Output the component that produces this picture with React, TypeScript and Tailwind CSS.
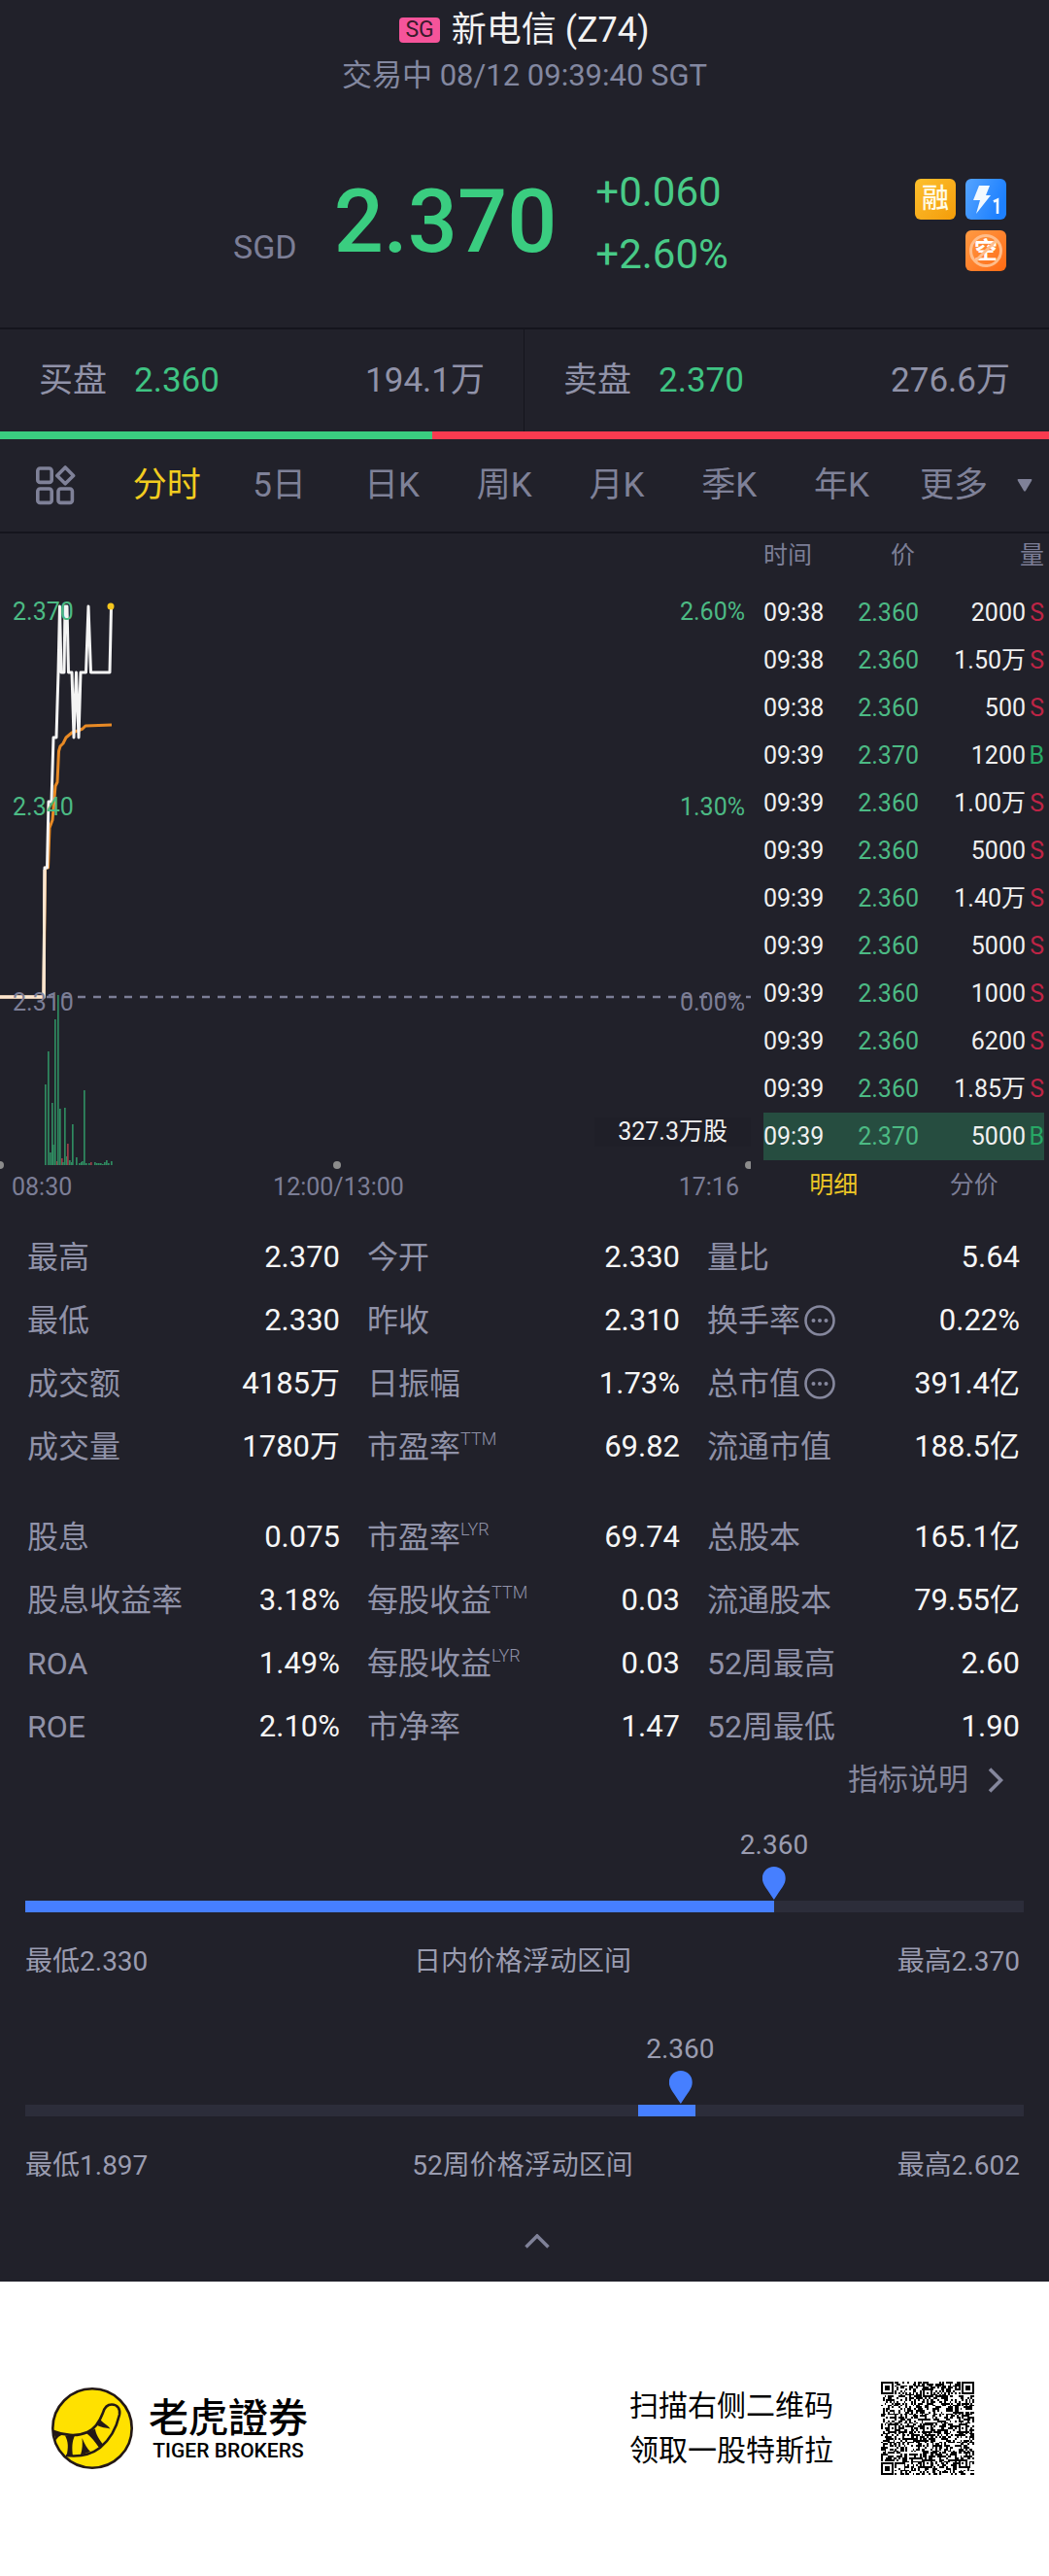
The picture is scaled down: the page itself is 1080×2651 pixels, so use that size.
import { useState } from 'react';

const periods = ['分时', '5日', '日K', '周K', '月K', '季K', '年K', '更多'];

const ticks = [
  { time: '09:38', price: '2.360', volume: '2000', side: 'S' },
  { time: '09:38', price: '2.360', volume: '1.50万', side: 'S' },
  { time: '09:38', price: '2.360', volume: '500', side: 'S' },
  { time: '09:39', price: '2.370', volume: '1200', side: 'B' },
  { time: '09:39', price: '2.360', volume: '1.00万', side: 'S' },
  { time: '09:39', price: '2.360', volume: '5000', side: 'S' },
  { time: '09:39', price: '2.360', volume: '1.40万', side: 'S' },
  { time: '09:39', price: '2.360', volume: '5000', side: 'S' },
  { time: '09:39', price: '2.360', volume: '1000', side: 'S' },
  { time: '09:39', price: '2.360', volume: '6200', side: 'S' },
  { time: '09:39', price: '2.360', volume: '1.85万', side: 'S' },
  { time: '09:39', price: '2.370', volume: '5000', side: 'B' },
];

type Stat = { label: string; value: string; sup?: string; info?: boolean };

const quoteStats: Stat[] = [
  { label: '最高', value: '2.370' },
  { label: '今开', value: '2.330' },
  { label: '量比', value: '5.64' },
  { label: '最低', value: '2.330' },
  { label: '昨收', value: '2.310' },
  { label: '换手率', value: '0.22%', info: true },
  { label: '成交额', value: '4185万' },
  { label: '日振幅', value: '1.73%' },
  { label: '总市值', value: '391.4亿', info: true },
  { label: '成交量', value: '1780万' },
  { label: '市盈率', value: '69.82', sup: 'TTM' },
  { label: '流通市值', value: '188.5亿' },
];

const companyStats: Stat[] = [
  { label: '股息', value: '0.075' },
  { label: '市盈率', value: '69.74', sup: 'LYR' },
  { label: '总股本', value: '165.1亿' },
  { label: '股息收益率', value: '3.18%' },
  { label: '每股收益', value: '0.03', sup: 'TTM' },
  { label: '流通股本', value: '79.55亿' },
  { label: 'ROA', value: '1.49%' },
  { label: '每股收益', value: '0.03', sup: 'LYR' },
  { label: '52周最高', value: '2.60' },
  { label: 'ROE', value: '2.10%' },
  { label: '市净率', value: '1.47' },
  { label: '52周最低', value: '1.90' },
];

// [x, height, rising]
const volumeBars: [number, number, boolean][] = [
  [47, 83, true], [50, 117, true], [52, 13, true], [54, 64, true], [55, 21, true],
  [57, 150, true], [59, 4, false], [60, 175, true], [62, 58, true], [64, 7, false],
  [65, 3, true], [67, 59, true], [69, 9, true], [70, 22, false], [72, 5, true],
  [74, 3, true], [75, 42, true], [79, 8, true], [82, 2, true], [84, 3, true],
  [85, 4, true], [87, 77, true], [89, 2, true], [92, 2, true], [94, 3, false],
  [98, 3, true], [100, 2, true], [102, 2, true], [104, 2, true], [106, 1, true],
  [108, 3, true], [110, 5, true], [112, 2, true], [115, 4, true],
];

function PriceChart() {
  return (
    <svg viewBox="0 0 773 656" className="block w-full" aria-hidden="true">
      <line x1="48" y1="477" x2="773" y2="477" stroke="#7c7e96" strokeWidth="2.5" strokeDasharray="8 8" />
      <g>
        {volumeBars.map(([x, h, rising]) => (
          <rect key={x} x={x - 1} y={650 - h} width="1.7" height={h} fill={rising ? '#2f8a60' : '#9a3d48'} />
        ))}
      </g>
      <polyline
        points="0,477 45,477 46.5,344 49.5,344 51,303 54,295 57,260 59,256 60.5,224 62,219 65,216 68,210 74,205 80,203 85,201 88,198 115,197"
        fill="none"
        stroke="#e88a25"
        strokeWidth="3"
        strokeLinejoin="round"
      />
      <polyline
        points="0,477 45,477 46,344 48.5,344 50,276 53,276 55,210 58,210 60,143 61.5,75 63,143 66,143 67,75 69,75 70.5,143 74,143 76,210 78.5,143 81,210 83,143 88.5,143 91,75 93.5,143 113,143 114.5,75"
        fill="none"
        stroke="#f4f4f4"
        strokeWidth="3"
        strokeLinejoin="round"
      />
      <polyline points="0,477 45,477 46,346" fill="none" stroke="#fbe6cf" strokeWidth="3" />
      <circle cx="114" cy="75" r="3.5" fill="#f5c61d" />
      <g fill="#8c8c8c">
        <circle cx="0" cy="650" r="4" />
        <circle cx="347" cy="650" r="4" />
        <circle cx="771" cy="650" r="4" />
      </g>
    </svg>
  );
}

function TickTable() {
  return (
    <table className="w-full table-fixed border-collapse text-[25px] leading-[30px]">
      <colgroup>
        <col className="w-[80px]" />
        <col className="w-[80px]" />
        <col />
        <col className="w-[19px]" />
      </colgroup>
      <thead>
        <tr className="h-[57px] text-[#7c7e96]">
          <th className="p-0 pb-3 text-left font-normal">时间</th>
          <th className="p-0 pb-3 pr-1 text-right font-normal">价</th>
          <th className="p-0 pb-3 text-right font-normal" colSpan={2}>量</th>
        </tr>
      </thead>
      <tbody>
        {ticks.map((t, i) => (
          <tr key={i} className={`h-[49px] ${i === ticks.length - 1 ? 'bg-[#264d40]' : ''}`}>
            <td className="p-0 text-[#f0f0f0]">{t.time}</td>
            <td className="p-0 text-right text-[#4cba84]">{t.price}</td>
            <td className="p-0 text-right text-[#f0f0f0]">{t.volume}</td>
            <td className={`p-0 text-right ${t.side === 'S' ? 'text-[#bd2445]' : 'text-[#27a765]'}`}>
              {t.side}
            </td>
          </tr>
        ))}
      </tbody>
    </table>
  );
}

function StatGrid({ items }: { items: Stat[] }) {
  return (
    <dl className="grid grid-cols-3 gap-x-7 pl-7 pr-[30px]">
      {items.map((s, i) => (
        <div key={i} className="flex h-[65px] items-center justify-between">
          <dt className="flex items-center text-[32px] leading-[40px] text-[#9092a8]">
            {s.label}
            {s.sup && <span className="self-start text-[18px] leading-[24px] font-light">{s.sup}</span>}
            {s.info && (
              <svg viewBox="0 0 32 32" className="ml-1 size-8" fill="none" aria-hidden="true">
                <circle cx="16" cy="16" r="14.5" stroke="#85879d" strokeWidth="2.6" />
                <g fill="#85879d">
                  <circle cx="9.5" cy="16" r="2" />
                  <circle cx="16" cy="16" r="2" />
                  <circle cx="22.5" cy="16" r="2" />
                </g>
              </svg>
            )}
          </dt>
          <dd className="text-[31px] leading-[40px] text-[#f6f6f6]">{s.value}</dd>
        </div>
      ))}
    </dl>
  );
}

type RangeProps = {
  title: string;
  low: string;
  high: string;
  current: string;
  from: number;
  to: number;
  marker: number;
};

function PriceRange({ title, low, high, current, from, to, marker }: RangeProps) {
  return (
    <section className="px-[26px] text-[28px] leading-[40px] text-[#9a9cb0]">
      <div className="relative h-[77px]">
        <div
          className="absolute top-0 flex -translate-x-1/2 flex-col items-center gap-[2px]"
          style={{ left: `${marker}%` }}
        >
          <span>{current}</span>
          <svg viewBox="0 0 24 34" className="h-[34px] w-6" aria-hidden="true">
            <path d="M12 0C5.2 0 0 5.2 0 12c0 6 5 11 12 22 7-11 12-16 12-22C24 5.2 18.8 0 12 0Z" fill="#467fff" />
          </svg>
        </div>
      </div>
      <div className="relative h-3 bg-[#2c2d3a]">
        <div className="absolute h-full bg-[#467fff]" style={{ left: `${from}%`, width: `${to - from}%` }} />
      </div>
      <div className="mt-[31px] flex justify-between">
        <span>最低{low}</span>
        <span>{title}</span>
        <span className="pr-1">最高{high}</span>
      </div>
    </section>
  );
}

const QR_SIZE = 53;

function qrPath() {
  const grid = Array.from({ length: QR_SIZE }, () => new Array<boolean>(QR_SIZE).fill(false));
  let seed = 20210812;
  for (let y = 0; y < QR_SIZE; y++) {
    for (let x = 0; x < QR_SIZE; x++) {
      seed = (Math.imul(seed, 1664525) + 1013904223) >>> 0;
      grid[y][x] = seed / 4294967296 < 0.5;
    }
  }
  const square = (cx: number, cy: number, radius: number, isDark: (d: number) => boolean) => {
    for (let y = cy - radius; y <= cy + radius; y++) {
      for (let x = cx - radius; x <= cx + radius; x++) {
        if (x < 0 || y < 0 || x >= QR_SIZE || y >= QR_SIZE) continue;
        grid[y][x] = isDark(Math.max(Math.abs(x - cx), Math.abs(y - cy)));
      }
    }
  };
  for (let i = 8; i < QR_SIZE - 8; i++) {
    grid[6][i] = i % 2 === 0;
    grid[i][6] = i % 2 === 0;
  }
  [[3, 3], [49, 3], [3, 49]].forEach(([x, y]) => square(x, y, 4, (d) => d !== 2 && d !== 4));
  [[26, 6], [6, 26], [26, 26], [46, 26], [26, 46], [46, 46]].forEach(([x, y]) => square(x, y, 2, (d) => d !== 1));

  return grid
    .map((row, y) => row.map((dark, x) => (dark ? `M${x} ${y}h1v1h-1z` : '')).join(''))
    .join('');
}

function TigerLogo() {
  return (
    <svg viewBox="0 0 84 84" className="size-[84px]" aria-hidden="true">
      <circle cx="42" cy="42" r="40.7" fill="#ffe100" stroke="#231815" strokeWidth="2.6" />
      <path
        d="M2 45C12 49 26 51 37 46C46 42 50 34 53 26C55 19 58 17.5 62 17.5C68 17.5 71 22 70 28C67 41 61 53 50 62C41 69 29 71.5 15 70"
        fill="none"
        stroke="#231815"
        strokeWidth="2.6"
      />
      <g fill="#231815">
        <path d="M1.5 44L12 48.5C8 49.5 6 51.5 4.5 54.5Z" />
        <path d="M14 49.5L24 49.5C21 56 21 62 22 71L15.5 70.5C17.5 62 17.5 56 14 49.5Z" />
        <path d="M31.5 52C34 58 37 63 40 66L30 69.5C32 63 32 58 31.5 52Z" />
        <path d="M36 47L45 42.5C45.5 48 49 53 53 58.5L49 62C45 56 41 51 36 47Z" />
        <path d="M47 39L50.5 33.5C54 37 58 39 60.5 42.5C56 41.5 51 41 47 39Z" />
      </g>
    </svg>
  );
}

export default function App() {
  const [period, setPeriod] = useState('分时');
  const [detail, setDetail] = useState('明细');

  return (
    <main lang="zh-CN" className="bg-[#21212a] font-['Roboto','Noto_Sans_CJK_SC',sans-serif]">
      <header className="flex flex-col items-center">
        <h1 className="flex h-[62px] items-center gap-3 text-[36px] leading-[48px] text-[#f2f2f2]">
          <span className="rounded-sm bg-[#f5549a] px-1.5 text-[23px] leading-[26px] text-[#3a1a2c]">SG</span>
          新电信 (Z74)
        </h1>
        <p className="text-[31px] leading-[32px] text-[#8388a0]">交易中 08/12 09:39:40 SGT</p>
      </header>

      <section className="flex h-[243px] pl-[240px] pr-11 pt-[76px]">
        <span className="pt-[60px] text-[34px] leading-[48px] text-[#7c7e96]">SGD</span>
        <strong className="ml-[38px] mt-[9px] text-[90px] leading-[100px] font-medium text-[#3acd80]">2.370</strong>
        <div className="ml-10 flex flex-col gap-4 pt-1 text-[42px] leading-[48px] text-[#48ca87]">
          <span>+0.060</span>
          <span>+2.60%</span>
        </div>
        <div className="ml-auto grid h-fit grid-cols-2 gap-x-2.5 gap-y-[11px] pt-[14px]">
          <span className="flex size-[42px] items-center justify-center rounded-md bg-linear-to-br from-[#fdc02c] to-[#f39c06] text-[28px] leading-[28px] font-medium text-[#fffbe6]">
            融
          </span>
          <svg viewBox="0 0 42 42" className="size-[42px]" aria-hidden="true">
            <defs>
              <linearGradient id="flash" x1="0" y1="0" x2="1" y2="0.4">
                <stop offset="0" stopColor="#55a4ff" />
                <stop offset="1" stopColor="#1d80ff" />
              </linearGradient>
            </defs>
            <rect width="42" height="42" rx="6" fill="url(#flash)" />
            <path d="M14 7H25L21 17H26L11 36L15 22H8Z" fill="#f2f9ff" />
            <path d="M29 23.5L33 21.5V36" fill="none" stroke="#f2f9ff" strokeWidth="2.6" />
          </svg>
          <span className="relative col-start-2 flex size-[42px] items-center justify-center rounded-md bg-linear-to-br from-[#ff9a42] to-[#ff6a10] text-[24px] leading-[24px] font-bold text-white">
            空
            <svg viewBox="0 0 42 42" className="absolute inset-0" fill="none" aria-hidden="true">
              <circle cx="21" cy="21" r="15.5" stroke="#ffbd8a" strokeWidth="3" />
              <path d="M10 32L32 10" stroke="#ffbd8a" strokeWidth="3" />
            </svg>
          </span>
        </div>
      </section>

      <section className="grid grid-cols-2 border-t-2 border-[#15151d] text-[35px] leading-[48px] text-[#9092a8]">
        <div className="flex h-[105px] items-center border-r border-[#15151d] pl-10 pr-10">
          买盘<span className="ml-7 text-[#3fc483]">2.360</span>
          <span className="ml-auto">194.1万</span>
        </div>
        <div className="flex h-[105px] items-center pl-10 pr-10">
          卖盘<span className="ml-7 text-[#3fc483]">2.370</span>
          <span className="ml-auto">276.6万</span>
        </div>
      </section>
      <div className="flex h-2 bg-[#f93b50]">
        <div className="w-[41.2%] bg-[#3acd80]" />
      </div>

      <nav className="flex h-[97px] items-center border-b-2 border-[#15151d] text-[35px] leading-[48px] text-[#7f8198]">
        <button type="button" aria-label="图表设置" className="w-[114px] pl-9">
          <svg viewBox="0 0 42 42" className="size-[42px]" fill="none" stroke="currentColor" strokeWidth="3.6" aria-hidden="true">
            <rect x="2.8" y="3" width="14.4" height="14.4" rx="2.5" />
            <rect x="2.8" y="24" width="14.4" height="14.4" rx="2.5" />
            <rect x="24" y="24" width="14.4" height="14.4" rx="2.5" />
            <path d="M31.2 2L39.6 10.400L31.2 18.800L22.800 10.400Z" strokeLinejoin="round" />
          </svg>
        </button>
        {periods.map((p) => (
          <button
            key={p}
            type="button"
            onClick={() => setPeriod(p)}
            className={`flex-1 ${p === period ? 'text-[#f2cc1f]' : ''}`}
          >
            {p}
          </button>
        ))}
        <span className="w-10 pl-[7px]">
          <svg viewBox="0 0 16 13" className="w-4" aria-hidden="true">
            <path d="M1.5 0H14.5Q16 0 15 2L9 12Q8 13.5 7 12L1 2Q0 0 1.5 0Z" fill="currentColor" />
          </svg>
        </span>
      </nav>

      <section className="flex text-[25px] leading-[30px]">
        <div className="min-w-0 flex-1">
          <div className="relative">
            <PriceChart />
            <div className="absolute left-[13px] top-[66px] flex h-[432px] flex-col justify-between text-[#4cba84]">
              <span>2.370</span>
              <span>2.340</span>
              <span className="text-[#7c7e96]">2.310</span>
            </div>
            <div className="absolute right-[6px] top-[66px] flex h-[432px] flex-col justify-between text-right text-[#4cba84]">
              <span>2.60%</span>
              <span>1.30%</span>
              <span className="text-[#7c7e96]">0.00%</span>
            </div>
            <span className="absolute right-0 top-[601px] bg-[#1f1f28] px-[24px] text-[#f0f0f0]">327.3万股</span>
          </div>
          <div className="flex justify-between px-3 pt-0.5 text-[#7c7e96]">
            <span>08:30</span>
            <span className="pr-[76px]">12:00/13:00</span>
            <span>17:16</span>
          </div>
        </div>
        <div className="ml-[13px] mr-[5px] w-[289px]">
          <TickTable />
          <div className="flex h-[52px] items-center text-[#7c7e96]">
            {['明细', '分价'].map((d) => (
              <button
                key={d}
                type="button"
                onClick={() => setDetail(d)}
                className={`flex-1 ${d === detail ? 'text-[#ecc625]' : ''}`}
              >
                {d}
              </button>
            ))}
          </div>
        </div>
      </section>

      <section className="flex flex-col gap-7 pt-[15px]">
        <StatGrid items={quoteStats} />
        <StatGrid items={companyStats} />
      </section>
      <div className="flex h-[46px] items-center justify-end pr-[47px]">
        <a href="#indicators" className="flex items-center gap-5 text-[31px] leading-[40px] text-[#85879d]">
          指标说明
          <svg viewBox="0 0 16 26" className="h-[26px] w-4" fill="none" stroke="currentColor" strokeWidth="3.6" aria-hidden="true">
            <path d="M2 1.5L13.5 13L2 24.5" />
          </svg>
        </a>
      </div>

      <div className="mt-6 flex flex-col gap-[50px]">
        <PriceRange title="日内价格浮动区间" low="2.330" high="2.370" current="2.360" from={0} to={75} marker={75} />
        <PriceRange title="52周价格浮动区间" low="1.897" high="2.602" current="2.360" from={61.4} to={67.1} marker={65.6} />
      </div>
      <div className="flex h-[99px] items-center justify-center pl-[26px] pt-4">
        <button type="button" aria-label="收起" className="text-[#7f8198]">
          <svg viewBox="0 0 26 15" className="w-[26px]" fill="none" stroke="currentColor" strokeWidth="3.5" aria-hidden="true">
            <path d="M1.5 13.5L13 2L24.5 13.5" />
          </svg>
        </button>
      </div>

      <footer className="flex h-[302px] items-center bg-white pl-[53px] pr-[77px] text-black">
        <TigerLogo />
        <div className="ml-4 flex flex-col items-center">
          <span lang="zh-TW" className="font-['Noto_Sans_CJK_TC',sans-serif] text-[41px] leading-[46px] font-medium">老虎證券</span>
          <span className="text-[21px] leading-[28px] font-medium">TIGER BROKERS</span>
        </div>
        <p className="ml-auto text-[30px] leading-[46px]">
          扫描右侧二维码
          <br />
          领取一股特斯拉
        </p>
        <svg viewBox="0 0 53 53" className="ml-[49px] size-24" shapeRendering="crispEdges" role="img" aria-label="二维码">
          <path d={qrPath()} fill="#000" />
        </svg>
      </footer>
    </main>
  );
}
